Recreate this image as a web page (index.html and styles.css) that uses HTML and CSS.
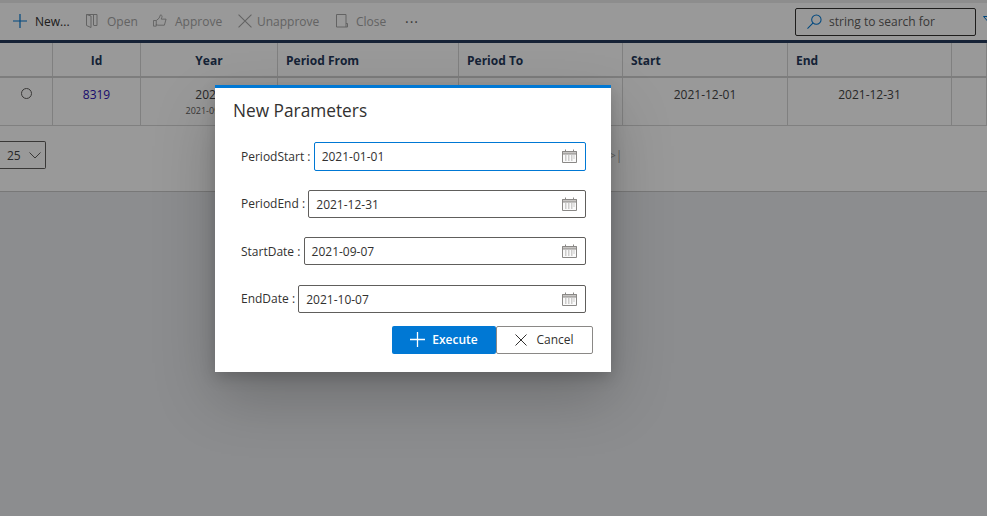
FILE: index.html
```html
<!DOCTYPE html>
<html lang="en">
<head>
<meta charset="utf-8">
<title>New Parameters</title>
<link rel="stylesheet" href="styles.css">
</head>
<body>
<div class="page">
  <div class="topstrip"></div>
  <div class="toolbar">
    <div class="tool active"><svg class="ic plus" viewBox="0 0 14 14"><path d="M7 0v14M0 7h14"/></svg><span>New...</span></div>
    <div class="tool t-open"><svg class="ic narrow" viewBox="0 0 12 14"><path d="M.5 .5h10.500v11h-3M.5 .5l4.500 1.500v11.500l-4.500-2zM7.500 .5v11"/></svg><span>Open</span></div>
    <div class="tool t-approve"><svg class="ic" viewBox="0 0 15 14"><path d="M.5 6.500h3v6h-3zM3.500 6.500l3-2.500 1.500-3.500c1.500 0 2 1 1.500 2.500l-.7 2h5.200l-1.800 6.500h-7l-2.200-.8"/></svg><span>Approve</span></div>
    <div class="tool t-un"><svg class="ic" viewBox="0 0 13 13"><path d="M.5 .5l12 12M12.500 .5l-12 12"/></svg><span>Unapprove</span></div>
    <div class="tool t-close"><svg class="ic narrow" viewBox="0 0 12 14"><path d="M.5 .5h9.500v12.500h-9.500zM10 9.500h1.500v3.500h-1.500"/></svg><span>Close</span></div>
    <div class="more">···</div>
    <div class="search"><svg class="lens" viewBox="0 0 16 16"><circle cx="10" cy="6" r="5"/><path d="M6.500 9.500l-6 6"/></svg><span>string to search for</span></div>
    <svg class="filter" viewBox="0 0 12 10"><path d="M.5 .5h11l-4.500 5v4l-2-1v-3z"/></svg>
  </div>
  <div class="grid head">
    <div class="cell"></div>
    <div class="cell center">Id</div>
    <div class="cell center">Year</div>
    <div class="cell">Period From</div>
    <div class="cell">Period To</div>
    <div class="cell">Start</div>
    <div class="cell">End</div>
    <div class="cell"></div>
  </div>
  <div class="grid body">
    <div class="cell center"><span class="radio"></span></div>
    <div class="cell center link">8319</div>
    <div class="cell center">2021<small>2021-09-07</small></div>
    <div class="cell"></div>
    <div class="cell"></div>
    <div class="cell center">2021-12-01</div>
    <div class="cell center">2021-12-31</div>
    <div class="cell"></div>
  </div>
  <div class="pager">
    <div class="size"><span>25</span><svg viewBox="0 0 12 7"><path d="M.5 .5l5.500 5.500 5.500-5.500"/></svg></div>
    <div class="last">&gt;|</div>
  </div>
</div>
<div class="overlay"></div>
<div class="modal">
  <h1>New Parameters</h1>
  <div class="field first"><label>PeriodStart :</label><div class="input focus"><span>2021-01-01</span><svg class="cal" viewBox="0 0 15 14"><use href="#cal"/></svg></div></div>
  <div class="field"><label>PeriodEnd :</label><div class="input"><span>2021-12-31</span><svg class="cal" viewBox="0 0 15 14"><use href="#cal"/></svg></div></div>
  <div class="field"><label>StartDate :</label><div class="input"><span>2021-09-07</span><svg class="cal" viewBox="0 0 15 14"><use href="#cal"/></svg></div></div>
  <div class="field"><label>EndDate :</label><div class="input"><span>2021-10-07</span><svg class="cal" viewBox="0 0 15 14"><use href="#cal"/></svg></div></div>
  <div class="actions">
    <button class="btn primary"><svg viewBox="0 0 14 14"><path d="M7 0v14M0 7h14"/></svg>Execute</button>
    <button class="btn plain"><svg viewBox="0 0 12 12"><path d="M.5 .5l11 11M11.500 .5l-11 11"/></svg>Cancel</button>
  </div>
</div>
<svg class="defs" width="0" height="0"><defs><g id="cal"><path class="calbody" d="M.5 2.500h14v11h-14z"/><path class="calhead" d="M.5 2.500h14v2.500h-14z"/><path class="caltick" d="M3.500 .5v2M11.500 .5v2"/><path class="caldots" d="M3 7h1.500M6 7h1.500M9 7h1.500M11.500 7h1M3 9h1.500M6 9h1.500M9 9h1.500M11.500 9h1M3 11h1.500M6 11h1.500M9 11h1.500"/></g></defs></svg>
</body>
</html>
```
FILE: styles.css
```css
* { box-sizing: border-box; }
html, body { margin: 0; height: 100%; }
body {
  width: 987px;
  height: 516px;
  overflow: hidden;
  position: relative;
  font-family: "Open Sans", "Noto Sans", sans-serif;
  font-size: 12px;
  color: #323130;
  background: #e9ebee;
}
.page { height: 192px; background: #fff; border-bottom: 1px solid #c8c8c8; overflow: hidden; }
.topstrip { height: 3px; background: #ebebeb; }
.toolbar {
  height: 37px;
  display: flex;
  align-items: center;
  padding: 0 0 1px 13px;
  color: #a5a5a5;
  position: relative;
  overflow: hidden;
}
.tool { display: flex; align-items: center; gap: 8px; flex: none; }
.tool.active { color: #323130; width: 73px; }
.t-open { width: 67px; gap: 9px; }
.t-approve { width: 85px; }
.t-un { width: 98px; gap: 5px; }
.t-close { width: 69px; gap: 8px; }
.ic { width: 14px; height: 14px; fill: none; stroke: #a5a5a5; stroke-width: 1; flex: none; }
.ic.narrow { width: 12px; }
.ic.plus { stroke: #0078d4; stroke-width: 1.2; }
.more { color: #605e5c; letter-spacing: 1px; font-size: 14px; width: 390px; flex: none; }
.search {
  width: 181px;
  height: 28px;
  border: 1px solid #323130;
  border-radius: 2px;
  display: flex;
  align-items: center;
  gap: 7px;
  padding-left: 11px;
  color: #605e5c;
  flex: none;
  margin-top: 1px;
}
.lens { width: 15px; height: 15px; fill: none; stroke: #0078d4; stroke-width: 1.1; }
.filter { width: 12px; height: 10px; margin-left: 7px; fill: none; stroke: #0078d4; flex: none; }
.grid {
  display: grid;
  grid-template-columns: 53px 88px 137px 181px 164px 165px 164px 35px;
  width: 987px;
}
.head {
  height: 38px;
  border-top: 3px solid #25395a;
  border-bottom: 2px solid #d0d0d0;
  font-weight: 700;
  color: #25395a;
}
.head .cell { display: flex; align-items: center; padding: 1px 0 0 8px; border-right: 1px solid #d5d5d5; }
.head .cell.center { justify-content: center; padding-left: 0; }
.body { height: 48px; border-bottom: 1px solid #d5d5d5; color: #444; }
.body .cell { border-right: 1px solid #d5d5d5; padding-top: 8px; line-height: 17px; }
.center { text-align: center; }
.link { color: #2b0fb5; }
small { display: block; font-size: 9px; line-height: 12px; color: #605e5c; margin-top: 2px; }
.radio { display: inline-block; width: 11px; height: 11px; border: 1px solid #605e5c; border-radius: 50%; }
.pager { display: flex; align-items: center; height: 60px; padding-bottom: 2px; }
.size {
  width: 46px;
  height: 28px;
  border: 1px solid #605e5c;
  border-left: 0;
  border-radius: 0 2px 2px 0;
  display: flex;
  align-items: center;
  gap: 8px;
  padding-left: 7px;
  color: #444;
}
.size svg { width: 12px; height: 7px; fill: none; stroke: #605e5c; }
.last { margin-left: 563px; color: #a5a5a5; }
.overlay { position: absolute; inset: 0; background: rgba(0, 0, 0, .4); }
.modal {
  position: absolute;
  left: 215px;
  top: 85px;
  width: 396px;
  height: 287px;
  background: #fff;
  border-top: 3px solid #0078d4;
  padding: 0 25px 0 26px;
  box-shadow: 0 25.600px 57.600px rgba(0, 0, 0, .22), 0 4.800px 14.400px rgba(0, 0, 0, .18);
}
.modal h1 {
  margin: 0 0 0 -8px;
  height: 54px;
  font-size: 17.300px;
  font-weight: 500;
  line-height: 24px;
  color: #323130;
  padding-top: 11px;
}
.field { display: flex; align-items: center; gap: 3.200px; height: 28px; margin-bottom: 19.450px; }
.field.first { height: 28.500px; }
.field label { font-size: 12px; color: #323130; white-space: nowrap; }
.input {
  flex: 1;
  height: 100%;
  border: 1px solid #605e5c;
  border-radius: 2px;
  display: flex;
  align-items: center;
  justify-content: space-between;
  padding: 1px 8px 0 7px;
  font-size: 12px;
  color: #323130;
}
.input.focus { border-color: #0078d4; }
.cal { width: 15px; height: 14px; margin-top: -1px; }
.calbody { fill: #fafafa; stroke: #8a8886; }
.calhead { fill: #c8c6c4; stroke: #8a8886; }
.caltick { fill: none; stroke: #8a8886; }
.caldots { fill: none; stroke: #a19f9d; }
.defs { position: absolute; }
.actions { display: flex; justify-content: flex-end; margin-right: -7px; margin-top: -6.300px; }
.btn {
  height: 28px;
  font: inherit;
  font-size: 12px;
  display: flex;
  align-items: center;
  justify-content: center;
  gap: 7px;
  border-radius: 2px;
  padding: 0;
}
.btn svg { fill: none; stroke: currentColor; }
.primary { width: 104px; background: #0078d4; border: 0; color: #fff; font-weight: 600; }
.primary svg { width: 15px; height: 15px; stroke-width: 1.2; }
.plain { width: 97px; background: #fff; border: 1px solid #8a8886; color: #323130; gap: 9px; }
.plain svg { width: 12px; height: 12px; }
```
